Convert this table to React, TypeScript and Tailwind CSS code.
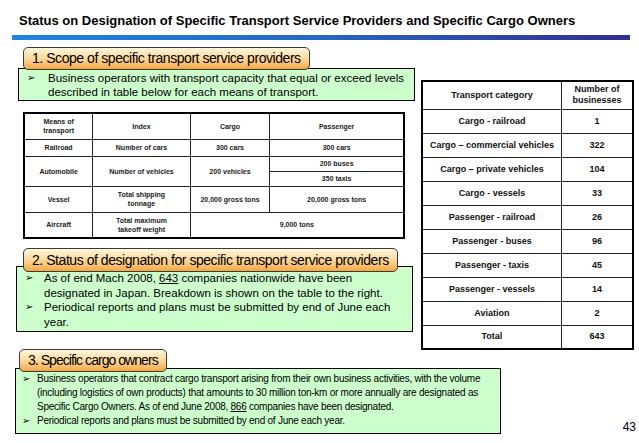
const font = "font-['Liberation_Sans',Arial,sans-serif]";

function Tab({ children, className = '' }: { children: React.ReactNode; className?: string }) {
  return (
    <div
      className={`relative z-10 w-fit rounded-[5px] border border-[#3a3a3a] bg-linear-to-b from-[#fff6dc] via-[#fcd99a] to-[#f4a83e] px-[8px] text-[14px] leading-[21px] ${className}`}
    >
      {children}
    </div>
  );
}

function Bullet({ children, text = 'text-[11.5px]', gap = 'pl-[8px] w-[29px]' }: { children: React.ReactNode; text?: string; gap?: string }) {
  return (
    <div className={`flex ${text}`}>
      <span className={`${gap} shrink-0 font-['DejaVu_Sans',sans-serif] text-[10px]`}>➢</span>
      <span>{children}</span>
    </div>
  );
}

const counts: [string, string][] = [
  ['Cargo - railroad', '1'],
  ['Cargo – commercial vehicles', '322'],
  ['Cargo – private vehicles', '104'],
  ['Cargo - vessels', '33'],
  ['Passenger - railroad', '26'],
  ['Passenger - buses', '96'],
  ['Passenger - taxis', '45'],
  ['Passenger - vessels', '14'],
  ['Aviation', '2'],
  ['Total', '643'],
];

export default function App() {
  const td = 'border border-[#222] text-center align-middle p-0';
  return (
    <div className={`w-[639px] h-[443px] overflow-hidden bg-white text-black ${font}`}>
      <h1 className="pl-[19px] pt-[13px] text-[13px] font-bold leading-[16px]">
        Status on Designation of Specific Transport Service Providers and Specific Cargo Owners
      </h1>
      <div className="ml-[12px] mt-[6px] h-[5px] w-[618px] bg-linear-to-r from-[#1e86e0] via-[#2466c4] to-[#2e2f8f]" />

      <div className="flex">
        <div className="w-[421px] shrink-0">
          <Tab className="ml-[23px] mt-[7px] tracking-[-0.45px]">1. Scope of specific transport service providers</Tab>
          <div className="ml-[18px] -mt-[2px] h-[33px] w-[397px] border border-black bg-[#ccffcc] pt-[2px] leading-[14px]">
            <Bullet>
              Business operators with transport capacity that equal or exceed levels<br />
              described in table below for each means of transport.
            </Bullet>
          </div>

          <table className="ml-[23px] mt-[11px] w-[382px] border-collapse border-2 border-black text-[7px] font-bold leading-[9px] text-[#222]">
            <colgroup>
              <col className="w-[69px]" />
              <col className="w-[98px]" />
              <col className="w-[80px]" />
              <col className="w-[135px]" />
            </colgroup>
            <tbody>
              <tr className="h-[26px]">
                <td className={td}>Means of<br />transport</td>
                <td className={td}>Index</td>
                <td className={td}>Cargo</td>
                <td className={td}>Passenger</td>
              </tr>
              <tr className="h-[17px]">
                <td className={td}>Railroad</td>
                <td className={td}>Number of cars</td>
                <td className={td}>300 cars</td>
                <td className={td}>300 cars</td>
              </tr>
              <tr className="h-[15px]">
                <td rowSpan={2} className={td}>Automobile</td>
                <td rowSpan={2} className={td}>Number of vehicles</td>
                <td rowSpan={2} className={td}>200 vehicles</td>
                <td className={td}>200 buses</td>
              </tr>
              <tr className="h-[15px]">
                <td className={td}>350 taxis</td>
              </tr>
              <tr className="h-[26px]">
                <td className={td}>Vessel</td>
                <td className={td}>Total shipping<br />tonnage</td>
                <td className={td}>20,000 gross tons</td>
                <td className={td}>20,000 gross tons</td>
              </tr>
              <tr className="h-[26px]">
                <td className={td}>Aircraft</td>
                <td className={td}>Total maximum<br />takeoff weight</td>
                <td colSpan={2} className={td}>9,000 tons</td>
              </tr>
            </tbody>
          </table>

          <Tab className="ml-[23px] mt-[9px] leading-[22px] tracking-[-0.45px]">2. Status of designation for specific transport service providers</Tab>
          <div className="ml-[16px] -mt-[6px] h-[66px] w-[397px] border border-black bg-[#ccffcc] pt-[4px] leading-[14.5px]">
            <Bullet gap="pl-[8px] w-[27px]">
              As of end Mach 2008, <span className="underline">643</span> companies nationwide have been<br />
              designated in Japan. Breakdown is shown on the table to the right.
            </Bullet>
            <Bullet gap="pl-[8px] w-[27px]">
              Periodical reports and plans must be submitted by end of June each<br />
              year.
            </Bullet>
          </div>
        </div>

        <div className="pt-[40px]">
          <table className="w-[213px] border-collapse border-2 border-black text-[9px] font-bold leading-[11px] text-[#111]">
            <colgroup>
              <col className="w-[141px]" />
              <col className="w-[72px]" />
            </colgroup>
            <tbody>
              <tr className="h-[28px]">
                <td className={td}>Transport category</td>
                <td className={td}>Number of<br />businesses</td>
              </tr>
              {counts.map(([k, v]) => (
                <tr key={k} className="h-[24px]">
                  <td className={td}>{k}</td>
                  <td className={td}>{v}</td>
                </tr>
              ))}
            </tbody>
          </table>
        </div>
      </div>

      <div className="flex items-end">
        <div>
          <Tab className="ml-[19px] -mt-[1px] leading-[21px] tracking-[-0.95px]">3. Specific cargo owners</Tab>
          <div className="ml-[15px] -mt-[4px] h-[66px] w-[486px] border border-black bg-[#ccffcc] pt-[3px] leading-[14px] tracking-[-0.25px]">
            <Bullet text="text-[10px]" gap="pl-[6px] w-[21px]">
              Business operators that contract cargo transport arising from their own business activities, with the volume<br />
              (including logistics of own products) that amounts to 30 million ton-km or more annually are designated as<br />
              Specific Cargo Owners. As of end June 2008, <span className="underline">866</span> companies have been designated.
            </Bullet>
            <Bullet text="text-[10px]" gap="pl-[6px] w-[21px]">
              Periodical reports and plans must be submitted by end of June each year.
            </Bullet>
          </div>
        </div>
        <div className="ml-auto pr-[3px] text-[12px] leading-[14px]">43</div>
      </div>
    </div>
  );
}
